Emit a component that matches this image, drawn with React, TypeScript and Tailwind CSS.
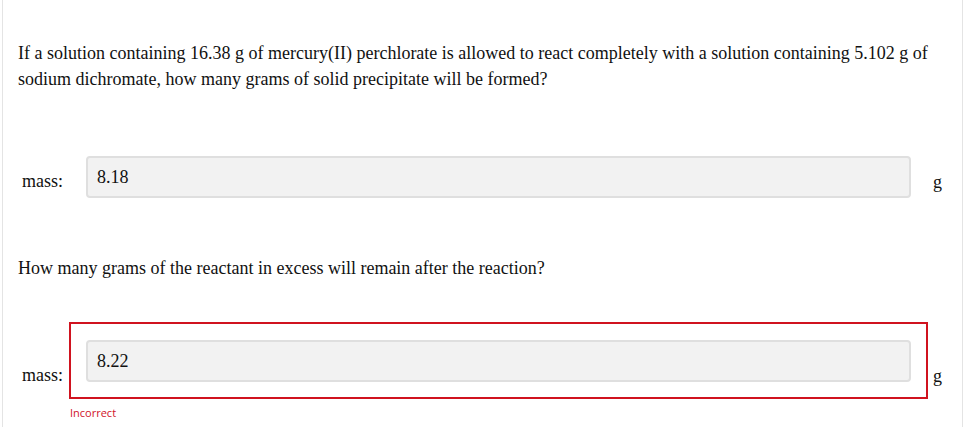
function AnswerRow({ value, wrong }: { value: string; wrong?: boolean }) {
  return (
    <div className="flex items-start">
      <div className={`w-[51px] pl-[4px] text-[18px] leading-[26px] text-[#111] ${wrong ? 'mt-[40px]' : 'mt-[30px]'}`}>
        mass:
      </div>
      <div
        className={`w-[859px] border-2 pt-[16px] pb-[15px] px-[15px] ${wrong ? 'border-[#d0131f]' : 'border-transparent'}`}
      >
        <div className="h-[42px] rounded-[4px] border-2 border-[#dfdfdf] bg-[#f2f2f2] px-[9px] text-[18px] leading-[38px] text-[#111]">
          {value}
        </div>
      </div>
      <div className={`pl-[5px] text-[18px] leading-[26px] text-[#111] ${wrong ? 'mt-[41px]' : 'mt-[31px]'}`}>g</div>
    </div>
  );
}

export default function App() {
  return (
    <div className="h-[427px] w-[966px] overflow-hidden bg-white font-['Liberation_Serif',serif]">
      <div className="ml-[2px] h-full w-[961px] border-x border-[#e4e4e4] pl-[15px] pt-[40px]">
        <p className="w-[920px] text-[18px] leading-[26px] text-[#111]">
          If a solution containing 16.38 g of mercury(II) perchlorate is allowed to react completely with a solution
          containing 5.102 g of sodium dichromate, how many grams of solid precipitate will be formed?
        </p>

        <div className="mt-[46px]">
          <AnswerRow value="8.18" />
        </div>

        <p className="mt-[40px] text-[18px] leading-[26px] text-[#111]">
          How many grams of the reactant in excess will remain after the reaction?
        </p>

        <div className="mt-[41px]">
          <AnswerRow value="8.22" wrong />
        </div>
        <div className="mt-[6px] pl-[52px] font-['Open_Sans',sans-serif] text-[11px] leading-[16px] text-[#d0132a]">
          Incorrect
        </div>
      </div>
    </div>
  );
}
